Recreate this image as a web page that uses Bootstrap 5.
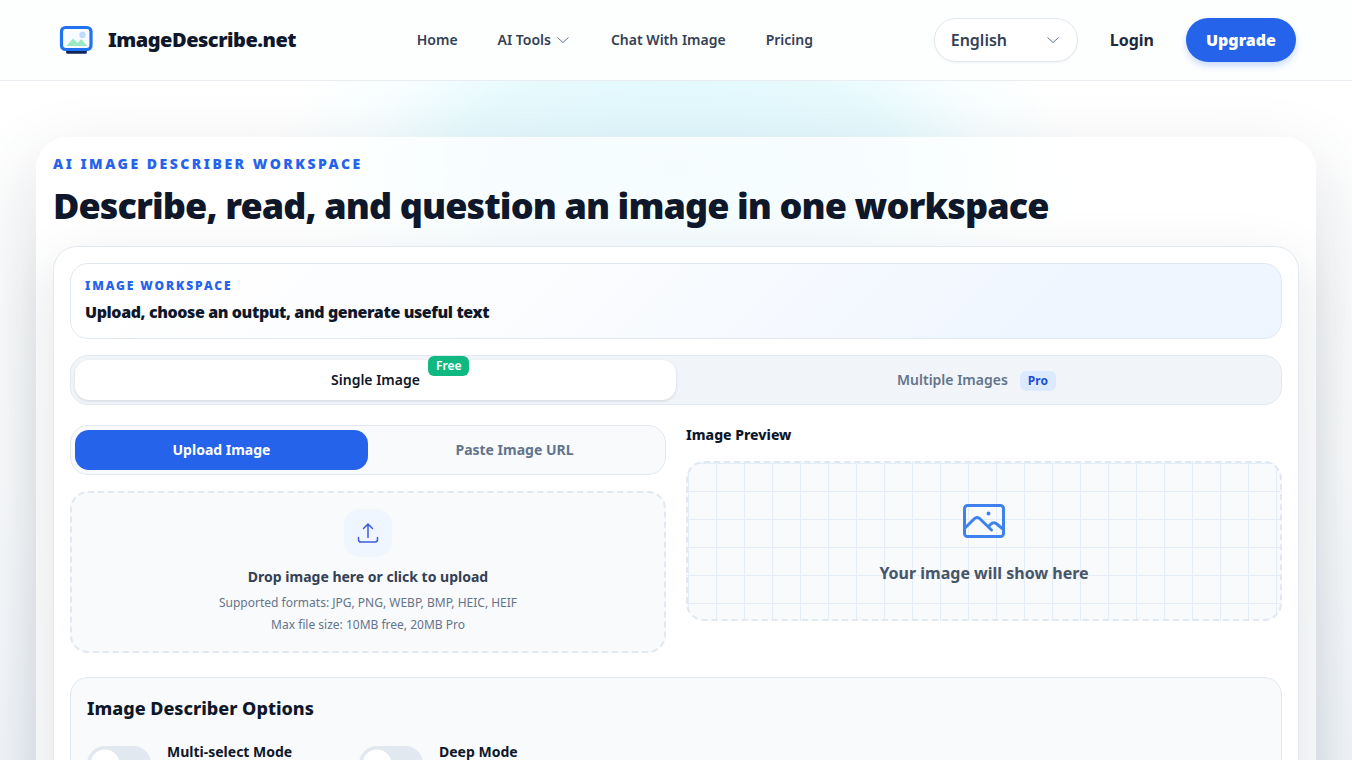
<!DOCTYPE html>
<html lang="en">
<head>
<meta charset="utf-8">
<meta name="viewport" content="width=device-width, initial-scale=1">
<title>ImageDescribe.net</title>
<link rel="stylesheet" href="https://cdn.jsdelivr.net/npm/bootstrap@5.3.0/dist/css/bootstrap.min.css">
<style>
  body { font-family: "Noto Sans", sans-serif; color: #0f172a; font-size: 14px; line-height: 20px; overflow-x: hidden;
    background: linear-gradient(180deg, #fff 80px, #fafcfd 480px, #f3f7fb 760px); }
  h1, h2, h3, p { margin: 0; }
  .site-header { background: #fdfefe; border-bottom: 1px solid #e9edf1; position: relative; z-index: 2; }
  .header-inner { max-width: 1280px; height: 80px; padding: 0 20px; }
  .brand { font-size: 20px; font-weight: 900; letter-spacing: -0.5px; color: #0f172a; gap: 12px; }
  .main-nav { gap: 40px; }
  .main-nav .nav-link { color: #334155; font-weight: 600; padding: 0; }
  .lang-box { width: 144px; position: relative; }
  .lang-box select { appearance: none; width: 100%; height: 44px; border: 1px solid #e2e8f0; border-radius: 22px; background: #fff; padding: 0 16px; font-size: 16px; font-weight: 600; color: #334155; box-shadow: 0 1px 2px rgba(15,23,42,.05); }
  .lang-box svg { position: absolute; right: 19px; top: 16px; pointer-events: none; }
  .login { font-size: 16px; font-weight: 700; color: #1e293b; margin: 0 32px; }
  .btn-upgrade { height: 44px; padding: 0 20px; border-radius: 22px; font-size: 16px; font-weight: 900; background: #2563eb; color: #fff; border: 0; box-shadow: 0 4px 6px rgba(37,99,235,.22); }
  .hero { padding: 56px 36px; background: radial-gradient(ellipse 400px 210px at 50% 90px, rgba(216,245,252,.85), rgba(222,248,253,.75) 55%, rgba(232,252,255,.3) 80%, rgba(236,254,255,0)); }
  .workspace { max-width: 1280px; padding: 16px; border: 1px solid rgba(255,255,255,.8); border-radius: 32px; background: rgba(255,255,255,.7); box-shadow: 0 30px 80px rgba(15,23,42,.14); }
  .eyebrow { color: #2563eb; font-weight: 900; letter-spacing: 2.5px; }
  .hero-title { font-size: 36px; line-height: 40px; font-weight: 900; letter-spacing: -0.9px; margin: 12px 0 20px; }
  .panel { background: #fff; border: 1px solid #e2e8f0; border-radius: 24px; padding: 16px; box-shadow: 0 20px 60px rgba(15,23,42,.12); }
  .intro { border: 1px solid #e2e8f0; border-radius: 18px; padding: 14px; background: linear-gradient(135deg, #fff, #fbfcfe 40%, #eff6ff 80%, #eff6ff); }
  .intro .eyebrow { font-size: 12px; line-height: 16px; letter-spacing: 1.9px; }
  .intro h2 { font-size: 16px; line-height: 24px; font-weight: 900; margin-top: 6px; letter-spacing: -0.4px; }
  .switcher { padding: 4px; border: 1px solid #e2e8f0; border-radius: 18px; background: #f8fafc; }
  .switcher button { flex: 1 1 0; height: 40px; border: 0; border-radius: 14px; background: transparent; color: #64748b; font-weight: 700; padding: 0; }
  .switcher .blue { background: #2563eb; color: #fff; }
  .mode-tabs { margin: 16px 0 20px; background: #f1f5f9; }
  .mode-tabs button { font-weight: 600; }
  .mode-tabs .white { background: #fff; color: #0f172a; box-shadow: 0 1px 3px rgba(15,23,42,.14); }
  .tab-text { position: relative; }
  .tag { font-size: 12px; line-height: 16px; padding: 2px 8px; border-radius: 6px; font-weight: 700; }
  .tag-free { position: absolute; left: 100%; bottom: 13px; margin-left: 8px; background: #10b981; color: #fff; font-weight: 600; }
  .tag-pro { background: #dbeafe; color: #1d4ed8; margin-left: 12px; display: inline-block; }
  .columns { display: grid; grid-template-columns: 1fr 1fr; gap: 20px; }
  .dropzone { margin-top: 16px; border: 2px dashed #e2e8f0; border-radius: 18px; background: #f8fafc; padding: 16px; cursor: pointer; display: block; }
  .upload-icon { width: 48px; height: 48px; border-radius: 16px; background: #eff6ff; }
  .drop-title { font-weight: 700; color: #334155; margin: 10px 0 6px; }
  .drop-note { font-size: 12px; line-height: 20px; color: #64748b; }
  .drop-note + .drop-note { margin-top: 2px; }
  .preview-title { font-size: 14px; line-height: 20px; font-weight: 800; margin-bottom: 16px; }
  .preview { height: 160px; border: 2px dashed #e2e8f0; border-radius: 18px; background-color: #f8fafc;
    background-image: linear-gradient(#e5edf7 1px, transparent 1px), linear-gradient(90deg, #e5edf7 1px, transparent 1px); background-size: 28px 28px; }
  .preview p { font-size: 16px; line-height: 24px; font-weight: 700; color: #475569; margin-top: 16px; }
  .options { margin-top: 24px; border: 1px solid #e2e8f0; border-radius: 18px; background: #f8fafc; padding: 16px; }
  .options h2 { font-size: 18px; line-height: 28px; font-weight: 800; margin-bottom: 24px; }
  .option-row { display: grid; grid-template-columns: 256px 256px; gap: 16px; }
  .option-row label { font-weight: 700; line-height: 20px; margin-left: 16px; margin-top: -4px; }
  .toggle { appearance: none; flex: none; width: 64px; height: 36px; margin: 0; border-radius: 18px; background: radial-gradient(circle at 18px 18px, #fff 14px, transparent 15px) #e2e8f0; }
</style>
</head>
<body>
<header class="site-header">
  <div class="header-inner container-fluid d-flex align-items-center justify-content-between">
    <a href="#" class="brand d-flex align-items-center text-decoration-none">
      <svg width="40" height="40" viewBox="0 0 40 40" aria-hidden="true">
        <rect x="10" y="30" width="21" height="3.800" rx="1.900" fill="#0f2557"/>
        <rect x="5.500" y="7.500" width="29.500" height="22" rx="4" fill="#f8fbff" stroke="#1f73f1" stroke-width="3.200"/>
        <circle cx="26.500" cy="15" r="3.200" fill="#bfdbfe"/>
        <path d="M10.500 26 17 18.500l4.500 4.500 3.500-4 6.500 7z" fill="#9be9c4"/>
      </svg>
      <span>ImageDescribe.net</span>
    </a>
    <nav class="main-nav nav">
      <a class="nav-link" href="#">Home</a>
      <a class="nav-link d-flex align-items-center" href="#">AI Tools
        <svg class="ms-1" width="16" height="16" viewBox="0 0 16 16" fill="none" stroke="#64748b"><path d="M2.500 5.500 8 10.500l5.500-5"/></svg></a>
      <a class="nav-link" href="#">Chat With Image</a>
      <a class="nav-link" href="#">Pricing</a>
    </nav>
    <div class="d-flex align-items-center">
      <div class="lang-box">
        <select aria-label="Language"><option>English</option></select>
        <svg width="12" height="12" viewBox="0 0 12 12" fill="none" stroke="#64748b"><path d="M.5 3.500 6 8.500l5.500-5"/></svg>
      </div>
      <a href="#" class="login text-decoration-none">Login</a>
      <button class="btn btn-upgrade" type="button">Upgrade</button>
    </div>
  </div>
</header>
<main class="hero">
  <section class="workspace mx-auto">
    <p class="eyebrow">AI IMAGE DESCRIBER WORKSPACE</p>
    <h1 class="hero-title">Describe, read, and question an image in one workspace</h1>
    <div class="panel">
      <div class="intro">
        <p class="eyebrow">IMAGE WORKSPACE</p>
        <h2>Upload, choose an output, and generate useful text</h2>
      </div>
      <div class="switcher mode-tabs d-flex">
        <button type="button" class="white"><span class="tab-text">Single Image<span class="tag tag-free">Free</span></span></button>
        <button type="button">Multiple Images<span class="tag tag-pro">Pro</span></button>
      </div>
      <div class="columns">
        <div>
          <div class="switcher d-flex">
            <button type="button" class="blue">Upload Image</button>
            <button type="button">Paste Image URL</button>
          </div>
          <label class="dropzone text-center">
            <input type="file" class="d-none" accept="image/*">
            <span class="upload-icon d-flex align-items-center justify-content-center mx-auto">
              <svg width="24" height="24" viewBox="0 0 24 24" fill="none" stroke="#3b5bdb" stroke-width="1.500" stroke-linecap="round" stroke-linejoin="round"><path d="M12 16.500V3m-4.500 4.500L12 3l4.500 4.500M2.500 16.500v2.300A2.200 2.200 0 0 0 4.700 21h14.600a2.200 2.200 0 0 0 2.200-2.200v-2.300"/></svg>
            </span>
            <span class="drop-title d-block">Drop image here or click to upload</span>
            <span class="drop-note d-block">Supported formats: JPG, PNG, WEBP, BMP, HEIC, HEIF</span>
            <span class="drop-note d-block">Max file size: 10MB free, 20MB Pro</span>
          </label>
        </div>
        <div>
          <h3 class="preview-title">Image Preview</h3>
          <div class="preview d-flex flex-column align-items-center justify-content-center">
            <svg width="48" height="48" viewBox="0 0 48 48" fill="none" stroke="#3f82ee" stroke-width="3" stroke-linecap="round" stroke-linejoin="round">
              <rect x="4.500" y="8.500" width="39" height="31" rx="3"/>
              <path d="m4.500 31.500 9.800-9.800a4 4 0 0 1 5.600 0L31.500 33M28.500 29.500l2.500-2.500a4 4 0 0 1 5.800 0l6.700 5.500"/>
              <circle cx="28.500" cy="16.500" r="1" fill="#3f82ee" stroke-width="2"/>
            </svg>
            <p>Your image will show here</p>
          </div>
        </div>
      </div>
      <section class="options">
        <h2>Image Describer Options</h2>
        <div class="option-row">
          <div class="d-flex"><input class="toggle" type="checkbox" role="switch" id="multi"><label for="multi">Multi-select Mode</label></div>
          <div class="d-flex"><input class="toggle" type="checkbox" role="switch" id="deep"><label for="deep">Deep Mode</label></div>
        </div>
      </section>
    </div>
  </section>
</main>
<script src="https://cdn.jsdelivr.net/npm/bootstrap@5.3.0/dist/js/bootstrap.bundle.min.js"></script>
</body>
</html>
